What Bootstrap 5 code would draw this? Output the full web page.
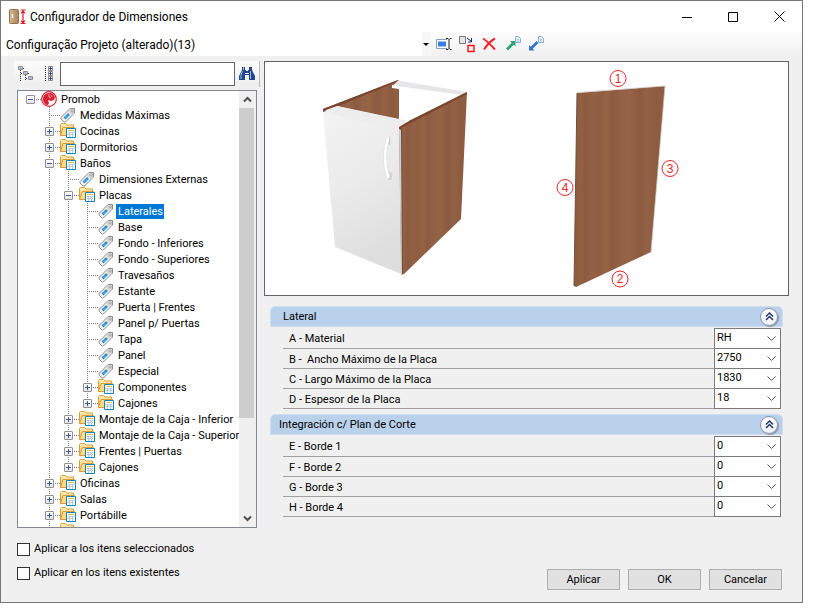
<!DOCTYPE html>
<html lang="es">
<head>
<meta charset="utf-8">
<meta name="viewport" content="width=device-width, initial-scale=1">
<title>Configurador de Dimensiones</title>
<link rel="stylesheet" href="https://cdn.jsdelivr.net/npm/bootstrap@5.3.0/dist/css/bootstrap.min.css">
<style>
body{font:11px/16px Roboto,"Liberation Sans",sans-serif;color:#000;background:#fff;padding:0 14px 11px 0}
button,input,select{font:inherit;color:inherit}
svg{display:block;flex:none}
.win{border:1px solid #777;background:#f0f0f0;min-height:0}
.title-row{height:31px;background:#fff;padding-left:7px}
.title-text,.config-pick{font-size:12px}
.win-btn{width:46px;height:31px;border:0;background:none;padding:0;display:flex;align-items:center;justify-content:center}
.config-row{height:25px;background:linear-gradient(#fdfdfd,#f0f0f0)}
.config-pick{flex:0 0 430px;border:0;height:24px;padding:1px 12px 0 5px;appearance:none;border-radius:0;
 background:#fff url("data:image/svg+xml,%3Csvg xmlns='http://www.w3.org/2000/svg' width='9' height='24'%3E%3Cpath fill='%23f7f7f7' d='M0 0h9v24H0z'/%3E%3Cpath d='M1 11h6l-3 3z'/%3E%3C/svg%3E") right center no-repeat}
.config-tools{padding-left:1px}
.icon-btn{border:0;background:none;padding:0;width:23px;height:24px;display:flex;align-items:center;justify-content:center}
.content-area{padding:4px 13px 0 16px;gap:4px;min-height:0}
.side-pane{flex:0 0 243px;min-width:0}
.tree-tools{height:26px;background:linear-gradient(#fcfcfc,#ededed);border-right:1px solid #bbb;margin-left:-3px;padding-right:1px}
.find-box{border:1px solid #646464;height:24px;min-width:0;padding:0 4px;background:#fff;border-radius:0}
.tree-frame{border:1px solid #828790;background:#fff;margin:3px 3px 0 0;padding-left:8px;min-height:0}
.tree-view,.tree-view ul{list-style:none;margin:0;padding:0}
.tree-view{overflow:hidden;min-width:0}
.tree-view ul{padding-left:19px}
.tree-view ul>li{background:repeating-linear-gradient(#808080 0 1px,transparent 1px 2px) 4px 0/1px 100% no-repeat}
.tree-view ul>li:last-child:not(.more){background-size:1px 8px}
.node{display:flex;align-items:center;height:16px;white-space:nowrap}
.slot{width:15px;height:16px;flex:none;display:flex;align-items:center;background:repeating-linear-gradient(90deg,#808080 0 1px,transparent 1px 2px) 4px 8px/11px 1px no-repeat}
.fold{width:9px;height:9px;border:1px solid #919191;border-radius:1px;padding:0;
 background:linear-gradient(#3b55a0,#3b55a0) center/5px 1px no-repeat,linear-gradient(#fff,#e4e4e4)}
.fold[aria-expanded=false]{background:linear-gradient(#3b55a0,#3b55a0) center/5px 1px no-repeat,linear-gradient(#3b55a0,#3b55a0) center/1px 5px no-repeat,linear-gradient(#fff,#e4e4e4)}
.label{line-height:14px;padding:1px 1px 0 2px;margin-left:2px}
.picked{background:#0078d7;color:#fff}
.scroller{width:17px;background:#f0f0f0;flex:none}
.scroller button{border:0;background:none;padding:0;height:17px;display:flex;align-items:center;justify-content:center}
.thumb{background:#cdcdcd;width:15px}
.picture-pane{min-width:0}
.picture-box{border:1px solid #646464;background:#fff}
.group{margin:10px 6px 0 6px}
.group+.group{margin-top:5px}
.group-head{height:21px;background:#b9d1ea;border:1px solid #cfdfef;border-radius:5px 5px 0 0;padding:0 4px 0 8px}
.fold-up{width:18px;height:18px;border-radius:50%;border:1px solid #8d97ab;background:linear-gradient(#fff,#eef1f7);box-shadow:1px 1px 1px #8a94a8;padding:0;display:flex;align-items:center;justify-content:center}
.rows{padding:1px 2px 0 13px}
.line{height:20px;border-bottom:1px solid #a0a0a0;padding-left:6px}
.line label{padding-top:2px}
.rows .line:first-child{height:21px}
.pick{width:67px;height:21px;align-self:flex-end;margin-bottom:-1px;border:1px solid #7a7a7a;border-radius:0;padding:0 2px 1px;appearance:none;
 background:#fff url("data:image/svg+xml,%3Csvg xmlns='http://www.w3.org/2000/svg' width='9' height='6'%3E%3Cpath fill='none' stroke='%23555' d='M.5.5l4 4 4-4'/%3E%3C/svg%3E") right 4px center no-repeat}
.footer-row{height:74px;padding:13px 20px 12px 16px}
.tick{appearance:none;width:13px;height:13px;border:1px solid #333;background:#fff;margin:0 4px 0 0}
.tick:checked{background:#0078d7}
.act{width:73px;height:21px;border:1px solid #adadad;background:#e1e1e1;padding:0;line-height:18px}
</style>
<script src="https://cdn.jsdelivr.net/npm/bootstrap@5.3.0/dist/js/bootstrap.bundle.min.js"></script>
</head>
<body class="vh-100 d-flex overflow-hidden">
<svg width="0" height="0" class="position-absolute" aria-hidden="true">
<defs>
<linearGradient id="fg" x1="0" y1="0" x2="0" y2="1"><stop offset="0" stop-color="#fff0b8"/><stop offset="1" stop-color="#f2c464"/></linearGradient>
<symbol id="folder" viewBox="0 0 16 16"><path d="M.5 12.500V1.500L1.500.5H5.500L7 2H13.500V5" fill="url(#fg)" stroke="#dd9b3a"/><path d="M.5 12.500L3 4.500H14.500V12.500Z" fill="#fbdc88" stroke="#dd9b3a"/><path d="M6.500 5.500h9v9h-9z" fill="#fff" stroke="#1583bd"/><path d="M8 7h6v1H8z" fill="#f6c23f"/><path d="M8 9.500h6M8 11.500h6M9.500 9v5M12.500 9v5" stroke="#b3cce0"/></symbol>
<symbol id="tag" viewBox="0 0 16 16"><path d="M1 10.500L10 1.500H14.500V6L5.500 15H4L1 12Z" fill="#f1f1f1" stroke="#8b8b8b"/><path d="M10.500 2.200H14V5.600L11.500 8 8 4.700Z" fill="#d7d7d7"/><circle cx="12.200" cy="3.900" r="1.100" fill="#fff" stroke="#888" stroke-width=".8"/><path d="M3.500 10.500L8 6 10 8 5.500 12.500Z" fill="#2496dd"/><path d="M5 9.500l2 1.500M6.500 8l2 1.500" stroke="#86cdf3" stroke-width=".6"/></symbol>
<symbol id="up2" viewBox="0 0 9 9"><path d="M1 4.500L4.500 1 8 4.500M1 8L4.500 4.500 8 8" fill="none" stroke="#253a6e" stroke-width="1.500"/></symbol>
<symbol id="page" viewBox="0 0 6 7"><path d="M.5.5h3l2 2v4h-5z" fill="#e9f3fd" stroke="#84afe0"/><path d="M2 3.500h2M2 5h2" stroke="#84afe0" stroke-width=".7"/></symbol>
</defs>
</svg>
<main class="win d-flex flex-column flex-grow-1">
<header class="title-row d-flex align-items-center flex-shrink-0">
<svg width="18" height="16" viewBox="0 0 18 16"><defs><linearGradient id="door"><stop offset="0" stop-color="#d9b98f"/><stop offset="1" stop-color="#a98158"/></linearGradient></defs><rect x="1.500" y=".5" width="9" height="14" rx="1" fill="url(#door)" stroke="#94714c"/><path d="M4.500 5v4" stroke="#fff" stroke-width="1.500"/><path d="M12.500 1h5M12.500 14.500h5M15 2v12M13 4.500l2-2.500 2 2.500M13 11.500l2 2.500 2-2.500" stroke="#e0182d" fill="none" stroke-width="1.200"/></svg>
<span class="title-text flex-grow-1 ps-1">Configurador de Dimensiones</span>
<button class="win-btn" aria-label="Minimizar"><svg width="10" height="10"><path d="M0 5.500h10" stroke="#000"/></svg></button>
<button class="win-btn" aria-label="Maximizar"><svg width="10" height="10"><path d="M.5.5h9v9h-9z" fill="none" stroke="#000"/></svg></button>
<button class="win-btn" aria-label="Cerrar"><svg width="11" height="11"><path d="M.5.5l10 10M10.500.5l-10 10" stroke="#000"/></svg></button>
</header>
<div class="config-row d-flex flex-shrink-0">
<select class="config-pick" aria-label="Configuração"><option>Configuração Projeto (alterado)(13)</option></select>
<div class="config-tools d-flex" role="toolbar">
<button class="icon-btn" aria-label="Renombrar"><svg width="17" height="16" viewBox="0 0 17 16"><path d="M12 3.500H1.500v9H12" fill="#fff" stroke="#8c9dbb"/><path d="M3 5.500h8v5H3z" fill="#3e7de0"/><path d="M11 2.500h2l1 1 1-1h1.500M11 13.500h2l1-1 1 1h1.500M14 3.500v9" stroke="#222" fill="none"/></svg></button>
<button class="icon-btn" aria-label="Duplicar"><svg width="17" height="17" viewBox="0 0 17 17"><path d="M1.500.5h6v7h-6z" fill="#e6e6e6" stroke="#777"/><path d="M9 2l4 3M13.500 2v4H10" stroke="#10268a" fill="none"/><path d="M10 9.500h6v6h-6z" fill="#f3f3f3" stroke="#e11" stroke-width="1.400"/></svg></button>
<button class="icon-btn" aria-label="Eliminar"><svg width="15" height="14" viewBox="0 0 15 14"><path d="M1 1.500C5 4 9 8 13 12.500M13 1.500C8 4 5 8 2 12.500" stroke="#f2262c" stroke-width="2" fill="none"/></svg></button>
<button class="icon-btn" aria-label="Exportar"><svg width="16" height="16" viewBox="0 0 16 16"><path d="M5 5H10.500V10.500L8.800 8.800 4.500 13 3 14.500 1 12.500 6.700 6.700Z" fill="#2ba676"/><use href="#page" x="10" width="6" height="7"/></svg></button>
<button class="icon-btn" aria-label="Importar"><svg width="16" height="16" viewBox="0 0 16 16"><path d="M1 9L2.700 10.700 8.500 5 10.500 7 4.800 12.800 6.500 14.500H1Z" fill="#3478c6"/><use href="#page" x="10" width="6" height="7"/></svg></button>
</div>
</div>
<div class="content-area d-flex flex-grow-1">
<section class="side-pane d-flex flex-column">
<div class="tree-tools d-flex align-items-center flex-shrink-0">
<button class="icon-btn" aria-label="Contraer todo"><svg width="16" height="16" viewBox="0 0 16 16" fill="#fff" stroke="#8a8a8a"><path d="M2.500 4v11M7.500 9v6M3 7.500h3M8 12.500h2M5 2.500h2M10 7.500h2" stroke="#333" stroke-dasharray="1 1"/><path d="M.5.5h4v3h-4zM5.500 5.500h4v3h-4zM10.500 10.500h4v3h-4z"/><path d="M1.500 2h2M6.500 7h2M11.500 12h2" stroke="#2a4390"/></svg></button>
<button class="icon-btn" aria-label="Expandir todo"><svg width="10" height="16" viewBox="0 0 10 16" fill="#fff" stroke="#8a8a8a"><path d="M1.500 0v16" stroke="#222" stroke-dasharray="1 1"/><path d="M4.500.5h4v4h-4zM4.500 5.500h4v4h-4zM4.500 10.500h4v4h-4z"/><path d="M5 2.500h3M6.500 1v3M5 7.500h3M6.500 6v3M5 12.500h3M6.500 11v3" stroke="#2a4390"/></svg></button>
<input class="find-box flex-grow-1" type="text" aria-label="Buscar">
<button class="icon-btn" aria-label="Buscar siguiente"><svg width="16" height="16" viewBox="0 0 16 16"><path d="M3 1h3v3h1v1h2V4h1V1h3v3l3 6v4h-6V9H6v5H0v-4l3-6Z" fill="#23478f"/><path d="M3.500 5L2 9v4M11.500 5v8M4.500 1v3" stroke="#9bb8e6" fill="none"/><path d="M6 7.500h4" stroke="#fff"/></svg></button>
</div>
<div class="tree-frame d-flex flex-grow-1">
<ul class="tree-view flex-grow-1">
<li><div class="node"><span class="slot"><button class="fold" aria-expanded="true" aria-label="Promob"></button></span><svg width="16" height="16" viewBox="0 0 16 16"><circle cx="8" cy="8" r="7.300" fill="#fff" stroke="#d32031" stroke-width="1.200"/><path d="M8 2C4 2 2 5 2 8c0 4 3 6 5 6l1-2-1-3 3 1 3-1 1-3-2-3-2-1Z" fill="#d91f33"/><path d="M8 3v3l2 1M10 4l1 2" stroke="#fff" fill="none" stroke-width=".6"/></svg><span class="label">Promob</span></div>
<ul>
<li><div class="node"><span class="slot"></span><svg width="16" height="16"><use href="#tag"/></svg><span class="label">Medidas Máximas</span></div></li>
<li><div class="node"><span class="slot"><button class="fold" aria-expanded="false" aria-label="Cocinas"></button></span><svg width="16" height="16"><use href="#folder"/></svg><span class="label">Cocinas</span></div></li>
<li><div class="node"><span class="slot"><button class="fold" aria-expanded="false" aria-label="Dormitorios"></button></span><svg width="16" height="16"><use href="#folder"/></svg><span class="label">Dormitorios</span></div></li>
<li><div class="node"><span class="slot"><button class="fold" aria-expanded="true" aria-label="Baños"></button></span><svg width="16" height="16"><use href="#folder"/></svg><span class="label">Baños</span></div>
<ul>
<li><div class="node"><span class="slot"></span><svg width="16" height="16"><use href="#tag"/></svg><span class="label">Dimensiones Externas</span></div></li>
<li><div class="node"><span class="slot"><button class="fold" aria-expanded="true" aria-label="Placas"></button></span><svg width="16" height="16"><use href="#folder"/></svg><span class="label">Placas</span></div>
<ul>
<li><div class="node"><span class="slot"></span><svg width="16" height="16"><use href="#tag"/></svg><span class="label picked">Laterales</span></div></li>
<li><div class="node"><span class="slot"></span><svg width="16" height="16"><use href="#tag"/></svg><span class="label">Base</span></div></li>
<li><div class="node"><span class="slot"></span><svg width="16" height="16"><use href="#tag"/></svg><span class="label">Fondo - Inferiores</span></div></li>
<li><div class="node"><span class="slot"></span><svg width="16" height="16"><use href="#tag"/></svg><span class="label">Fondo - Superiores</span></div></li>
<li><div class="node"><span class="slot"></span><svg width="16" height="16"><use href="#tag"/></svg><span class="label">Travesaños</span></div></li>
<li><div class="node"><span class="slot"></span><svg width="16" height="16"><use href="#tag"/></svg><span class="label">Estante</span></div></li>
<li><div class="node"><span class="slot"></span><svg width="16" height="16"><use href="#tag"/></svg><span class="label">Puerta | Frentes</span></div></li>
<li><div class="node"><span class="slot"></span><svg width="16" height="16"><use href="#tag"/></svg><span class="label">Panel p/ Puertas</span></div></li>
<li><div class="node"><span class="slot"></span><svg width="16" height="16"><use href="#tag"/></svg><span class="label">Tapa</span></div></li>
<li><div class="node"><span class="slot"></span><svg width="16" height="16"><use href="#tag"/></svg><span class="label">Panel</span></div></li>
<li><div class="node"><span class="slot"></span><svg width="16" height="16"><use href="#tag"/></svg><span class="label">Especial</span></div></li>
<li><div class="node"><span class="slot"><button class="fold" aria-expanded="false" aria-label="Componentes"></button></span><svg width="16" height="16"><use href="#folder"/></svg><span class="label">Componentes</span></div></li>
<li><div class="node"><span class="slot"><button class="fold" aria-expanded="false" aria-label="Cajones"></button></span><svg width="16" height="16"><use href="#folder"/></svg><span class="label">Cajones</span></div></li>
</ul></li>
<li><div class="node"><span class="slot"><button class="fold" aria-expanded="false" aria-label="Montaje de la Caja - Inferior"></button></span><svg width="16" height="16"><use href="#folder"/></svg><span class="label">Montaje de la Caja - Inferior</span></div></li>
<li><div class="node"><span class="slot"><button class="fold" aria-expanded="false" aria-label="Montaje de la Caja - Superior"></button></span><svg width="16" height="16"><use href="#folder"/></svg><span class="label">Montaje de la Caja - Superior</span></div></li>
<li><div class="node"><span class="slot"><button class="fold" aria-expanded="false" aria-label="Frentes | Puertas"></button></span><svg width="16" height="16"><use href="#folder"/></svg><span class="label">Frentes | Puertas</span></div></li>
<li><div class="node"><span class="slot"><button class="fold" aria-expanded="false" aria-label="Cajones"></button></span><svg width="16" height="16"><use href="#folder"/></svg><span class="label">Cajones</span></div></li>
</ul></li>
<li><div class="node"><span class="slot"><button class="fold" aria-expanded="false" aria-label="Oficinas"></button></span><svg width="16" height="16"><use href="#folder"/></svg><span class="label">Oficinas</span></div></li>
<li><div class="node"><span class="slot"><button class="fold" aria-expanded="false" aria-label="Salas"></button></span><svg width="16" height="16"><use href="#folder"/></svg><span class="label">Salas</span></div></li>
<li><div class="node"><span class="slot"><button class="fold" aria-expanded="false" aria-label="Portábille"></button></span><svg width="16" height="16"><use href="#folder"/></svg><span class="label">Portábille</span></div></li>
<li class="more"><div class="node"><span class="slot"></span><svg width="16" height="16"><use href="#folder"/></svg></div></li>
</ul></li>
</ul>
<div class="scroller d-flex flex-column">
<button aria-label="Subir"><svg width="9" height="7"><path d="M1 5.500l3.500-3.500L8 5.500" fill="none" stroke="#505050" stroke-width="2"/></svg></button>
<div class="flex-grow-1"><div class="thumb" style="height:77%"></div></div>
<button aria-label="Bajar"><svg width="9" height="7"><path d="M1 1.500L4.500 5 8 1.500" fill="none" stroke="#505050" stroke-width="2"/></svg></button>
</div>
</div>
</section>
<section class="picture-pane flex-grow-1">
<div class="picture-box">
<svg class="w-100 h-auto" viewBox="0 0 523 233" role="img" aria-label="Mueble y placa lateral con bordes numerados">
<defs>
<linearGradient id="wood" x1="0" x2="1" y1="0" y2="0"><stop offset="0" stop-color="#8d5a3e"/><stop offset=".08" stop-color="#926042"/><stop offset=".12" stop-color="#8c5a3f"/><stop offset=".2" stop-color="#926044"/><stop offset=".28" stop-color="#8f5d42"/><stop offset=".36" stop-color="#956446"/><stop offset=".42" stop-color="#8c5a40"/><stop offset=".52" stop-color="#936246"/><stop offset=".6" stop-color="#956445"/><stop offset=".72" stop-color="#8c5a40"/><stop offset=".8" stop-color="#936145"/><stop offset=".9" stop-color="#8d5b40"/><stop offset="1" stop-color="#8f5d42"/></linearGradient>
<linearGradient id="front" x1="0" x2=".3" y1="0" y2="1"><stop offset="0" stop-color="#f3f3f4"/><stop offset=".5" stop-color="#ebebec"/><stop offset="1" stop-color="#dededf"/></linearGradient>
</defs>
<path d="M58 47L133 18 134 26V58L72 44 61 48Z" fill="url(#wood)"/>
<path d="M58 47L133 18 134 19 61 49 58 50Z" fill="#78452d"/>
<path d="M133 18.500L202 30 197 33 128 23.500Z" fill="#e6e6e8"/><path d="M127 23l7 1v3l-7-1z" fill="#fff"/>
<path d="M134 64L202 30 196 157 139 212H136Z" fill="url(#wood)"/>
<path d="M134 64L202 30 202 32 136 66Z" fill="#7a452d"/>
<path d="M134 65l3 1 1 146-2 1z" fill="#754a38"/>
<path d="M61 48L72 44 144 59 134 65 133 68 59 52Z" fill="#ededee"/>
<path d="M58 50L134 68 136 212 70 185Z" fill="url(#front)"/>
<path d="M134 67l2 1 1 144-1 1z" fill="#cfcfd1"/>
<path d="M124.500 75v8M124 110l2 2v5h-3" fill="none" stroke="#cdcdcd" stroke-width="1.500"/>
<path d="M123 76Q117 95 123 115" fill="none" stroke="#d6d6d7" stroke-width="3.500" stroke-linecap="round"/>
<path d="M123 76Q117 95 123 115" fill="none" stroke="#fff" stroke-width="2.700" stroke-linecap="round"/>
<path d="M312 31L400 24 386 190 311 225 309 224Z" fill="url(#wood)"/>
<path d="M312 31L309 224" stroke="#6f503f" fill="none"/><path d="M312 30.500L400 24 386 190" stroke="#cfc8c2" fill="none" stroke-width=".7"/>
<g fill="#fff" stroke="#e4262c"><circle cx="353" cy="16.500" r="8"/><circle cx="355" cy="217" r="8"/><circle cx="405" cy="106.500" r="8"/><circle cx="300" cy="125.500" r="8"/></g>
<g fill="#e4262c" font-family="Liberation Sans, sans-serif" font-size="12" text-anchor="middle"><text x="353" y="21">1</text><text x="355" y="221">2</text><text x="405" y="111">3</text><text x="300" y="130">4</text></g>
</svg>
</div>
<div class="group">
<div class="group-head d-flex align-items-center"><span class="flex-grow-1 ps-1">Lateral</span><button class="fold-up" aria-label="Contraer Lateral"><svg width="9" height="9"><use href="#up2"/></svg></button></div>
<div class="rows">
<div class="line d-flex align-items-center"><label class="flex-grow-1" for="a">A - Material</label><select class="pick" id="a"><option>RH</option></select></div>
<div class="line d-flex align-items-center"><label class="flex-grow-1" for="b">B - &nbsp;Ancho Máximo de la Placa</label><select class="pick" id="b"><option>2750</option></select></div>
<div class="line d-flex align-items-center"><label class="flex-grow-1" for="c">C - Largo Máximo de la Placa</label><select class="pick" id="c"><option>1830</option></select></div>
<div class="line d-flex align-items-center"><label class="flex-grow-1" for="d">D - Espesor de la Placa</label><select class="pick" id="d"><option>18</option></select></div>
</div>
</div>
<div class="group">
<div class="group-head d-flex align-items-center"><span class="flex-grow-1">Integración c/ Plan de Corte</span><button class="fold-up" aria-label="Contraer Integración"><svg width="9" height="9"><use href="#up2"/></svg></button></div>
<div class="rows">
<div class="line d-flex align-items-center"><label class="flex-grow-1" for="e">E - Borde 1</label><select class="pick" id="e"><option>0</option></select></div>
<div class="line d-flex align-items-center"><label class="flex-grow-1" for="f">F - Borde 2</label><select class="pick" id="f"><option>0</option></select></div>
<div class="line d-flex align-items-center"><label class="flex-grow-1" for="g">G - Borde 3</label><select class="pick" id="g"><option>0</option></select></div>
<div class="line d-flex align-items-center"><label class="flex-grow-1" for="h">H - Borde 4</label><select class="pick" id="h"><option>0</option></select></div>
</div>
</div>
</section>
</div>
<footer class="footer-row d-flex justify-content-between flex-shrink-0">
<div class="d-flex flex-column gap-2">
<label class="d-flex align-items-center"><input class="tick" type="checkbox">Aplicar a los itens seleccionados</label>
<label class="d-flex align-items-center"><input class="tick" type="checkbox">Aplicar en los itens existentes</label>
</div>
<div class="d-flex gap-2 align-items-end">
<button class="act">Aplicar</button><button class="act">OK</button><button class="act">Cancelar</button>
</div>
</footer>
</main>
</body>
</html>
